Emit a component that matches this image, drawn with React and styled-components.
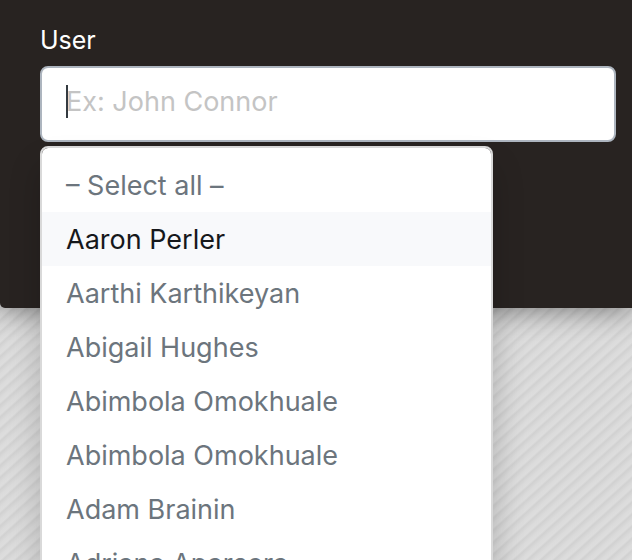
import React, { useState } from 'react'
import styled, { createGlobalStyle } from 'styled-components'

const GlobalStyle = createGlobalStyle`
  * {
    box-sizing: border-box;
  }
  body {
    margin: 0;
    font-family: Inter, 'Liberation Sans', sans-serif;
    font-size: 27px;
    line-height: 34px;
  }
`
const Page = styled.main`
  height: 100vh;
  overflow: hidden;
  background: repeating-linear-gradient(
    -42deg,
    #dddddd 0,
    #dbdbdb 3px,
    #d1d1d1 7px,
    #dddddd 9px
  );
`
const Panel = styled.section`
  padding: 24px 16px 166px 40px;
  border-radius: 0 0 0 5px;
  background: #282321;
  box-shadow: 0 2px 28px rgba(0, 0, 0, 0.45);
`
const Label = styled.label`
  display: block;
  margin-bottom: 10px;
  color: #fff;
  font-size: 25px;
  line-height: 32px;
`
const Field = styled.div`
  position: relative;
`
const Input = styled.input`
  display: block;
  width: 100%;
  height: 76px;
  padding: 0 24px 6px;
  border: 2px solid #adb5bf;
  border-radius: 8px;
  background: #fff;
  color: #343a40;
  caret-color: transparent;
  font: inherit;
  outline: none;

  &::placeholder {
    color: #c4c4c4;
    opacity: 1;
  }
`
const Caret = styled.span`
  position: absolute;
  top: 19px;
  left: 26px;
  width: 2px;
  height: 33px;
  background: #343a40;
`
const Menu = styled.ul`
  position: absolute;
  top: 100%;
  left: 0;
  width: 453px;
  max-width: 100%;
  margin: 4px 0 0;
  padding: 10px 0;
  border: 2px solid #d9d9d9;
  border-radius: 8px;
  background: #fff;
  background-clip: padding-box;
  box-shadow: 0 20px 32px rgba(0, 0, 0, 0.2);
  list-style: none;
`
const Option = styled.button`
  display: block;
  width: 100%;
  padding: 11px 24px 9px;
  border: 0;
  background: ${props => (props.$active ? '#f8f9fb' : 'transparent')};
  color: ${props => (props.$active ? '#16181b' : '#6c757d')};
  font: inherit;
  text-align: left;
  cursor: pointer;
`

const users = [
  '– Select all –',
  'Aaron Perler',
  'Aarthi Karthikeyan',
  'Abigail Hughes',
  'Abimbola Omokhuale',
  'Abimbola Omokhuale',
  'Adam Brainin',
  'Adriana Aparsera',
]

export default function App() {
  const [value, setValue] = useState('')
  const [active, setActive] = useState(1)

  return (
    <Page>
      <GlobalStyle />
      <Panel>
        <Label htmlFor="user">User</Label>
        <Field>
          <Input
            id="user"
            type="text"
            autoComplete="off"
            placeholder="Ex: John Connor"
            value={value}
            onChange={event => setValue(event.target.value)}
          />
          {value === '' && <Caret />}
          <Menu>
            {users.map((user, index) => (
              <li key={index}>
                <Option
                  type="button"
                  $active={index === active}
                  onMouseEnter={() => setActive(index)}
                  onClick={() => setValue(user)}
                >
                  {user}
                </Option>
              </li>
            ))}
          </Menu>
        </Field>
      </Panel>
    </Page>
  )
}
